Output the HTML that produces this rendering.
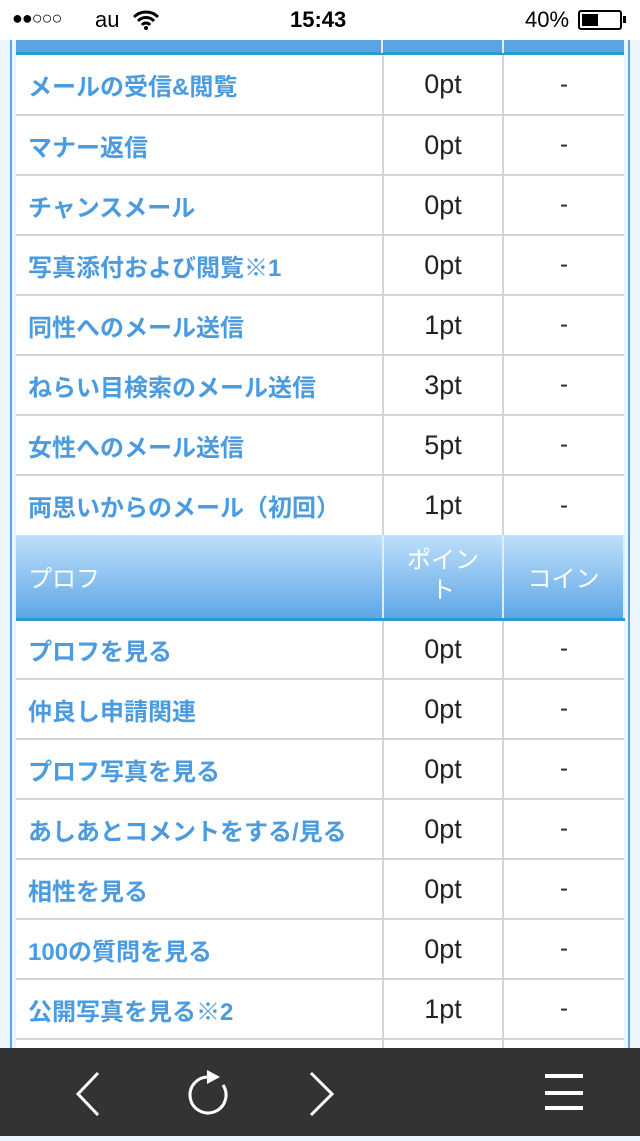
<!DOCTYPE html>
<html><head><meta charset="utf-8"><style>
*{margin:0;padding:0;box-sizing:border-box}
body{width:640px;height:1136px;overflow:hidden;background:#eaf5fd;font-family:"Liberation Sans","Noto Sans CJK JP",sans-serif;position:relative}
.sb{position:absolute;top:0;left:0;width:640px;height:40px;background:#fff;font-size:22px;color:#000}
.frame{position:absolute;left:10px;top:40px;width:620px;height:1010px;border-left:2px solid #5aa4e4;border-right:2px solid #5aa4e4}
table{position:absolute;left:16px;width:608px;border-collapse:collapse;table-layout:fixed}
td{height:60px;background:#fff;border-bottom:2px solid #d4d4d4;border-right:2px solid #d4d4d4;font-size:24px}
td:last-child{border-right:none}
td.n{color:#4a9be0;font-weight:bold;padding-left:12px;white-space:nowrap}
td.p{text-align:center;color:#222;font-size:27px}
td.c{text-align:center;color:#222;font-size:24px}
tr.h td{height:84px;background:linear-gradient(#bfe0fb,#5ea6e6);color:#fff;font-weight:normal;border-bottom:3px solid #2b9bd6;border-right:2px solid #e0eefa}
.bar{position:absolute;left:0;top:1048px;width:640px;height:88px;background:#333}
</style></head><body>
<div class="sb">
<span style="position:absolute;left:12px;top:8px;font-size:18px;letter-spacing:-1px">●●○○○</span>
<span style="position:absolute;left:95px;top:7px">au</span>
<svg style="position:absolute;left:132px;top:10px" width="28" height="20" viewBox="0 0 28 20"><path d="M2 7a17 17 0 0 1 24 0M6 11a11 11 0 0 1 16 0M10 15a5 5 0 0 1 8 0" stroke="#000" stroke-width="3" fill="none"/><circle cx="14" cy="18" r="2" fill="#000"/></svg>
<span style="position:absolute;left:290px;top:7px;font-weight:bold">15:43</span>
<span style="position:absolute;left:525px;top:7px">40%</span>
<div style="position:absolute;left:578px;top:10px;width:44px;height:20px;border:2px solid #000;border-radius:3px"><div style="margin:2px;width:16px;height:12px;background:#000"></div></div>
<div style="position:absolute;left:623px;top:16px;width:3px;height:7px;background:#000"></div>
</div>
<div class="frame"></div>
<div style="position:absolute;left:16px;top:40px;width:608px;height:15px;background:#5aa4e4;border-bottom:3px solid #2b9bd6"></div>
<div style="position:absolute;left:381px;top:40px;width:2px;height:13px;background:#e0eefa"></div>
<div style="position:absolute;left:502px;top:40px;width:2px;height:13px;background:#e0eefa"></div>
<table style="top:55px">
<colgroup><col style="width:367px"><col style="width:120px"><col style="width:121px"></colgroup>
<tr><td class="n">メールの受信&amp;閲覧</td><td class="p">0pt</td><td class="c">-</td></tr>
<tr><td class="n">マナー返信</td><td class="p">0pt</td><td class="c">-</td></tr>
<tr><td class="n">チャンスメール</td><td class="p">0pt</td><td class="c">-</td></tr>
<tr><td class="n">写真添付および閲覧※1</td><td class="p">0pt</td><td class="c">-</td></tr>
<tr><td class="n">同性へのメール送信</td><td class="p">1pt</td><td class="c">-</td></tr>
<tr><td class="n">ねらい目検索のメール送信</td><td class="p">3pt</td><td class="c">-</td></tr>
<tr><td class="n">女性へのメール送信</td><td class="p">5pt</td><td class="c">-</td></tr>
<tr><td class="n" style="border-bottom:none">両思いからのメール（初回）</td><td class="p" style="border-bottom:none">1pt</td><td class="c" style="border-bottom:none">-</td></tr>
<tr class="h"><td style="padding-left:12px">プロフ</td><td style="text-align:center;line-height:30px">ポイン<br>ト</td><td style="text-align:center">コイン</td></tr>
<tr><td class="n">プロフを見る</td><td class="p">0pt</td><td class="c">-</td></tr>
<tr><td class="n">仲良し申請関連</td><td class="p">0pt</td><td class="c">-</td></tr>
<tr><td class="n">プロフ写真を見る</td><td class="p">0pt</td><td class="c">-</td></tr>
<tr><td class="n">あしあとコメントをする/見る</td><td class="p">0pt</td><td class="c">-</td></tr>
<tr><td class="n">相性を見る</td><td class="p">0pt</td><td class="c">-</td></tr>
<tr><td class="n">100の質問を見る</td><td class="p">0pt</td><td class="c">-</td></tr>
<tr><td class="n">公開写真を見る※2</td><td class="p">1pt</td><td class="c">-</td></tr>
<tr><td class="n"></td><td class="p"></td><td class="c"></td></tr>
</table>
<div class="bar">
<svg width="640" height="88" viewBox="0 0 640 88" fill="none" stroke="#fff" stroke-width="3">
<path d="M98 25L78 46L98 67"/>
<path d="M311 25L332 46L311 67"/>
<path d="M223 37A18 18 0 1 1 209 29"/>
<path d="M207 22L220 29L207 36Z" fill="#fff" stroke="none"/>
<path d="M545 28H583M545 45H583M545 60H583" stroke-width="4"/>
</svg>
</div>
</body></html>
